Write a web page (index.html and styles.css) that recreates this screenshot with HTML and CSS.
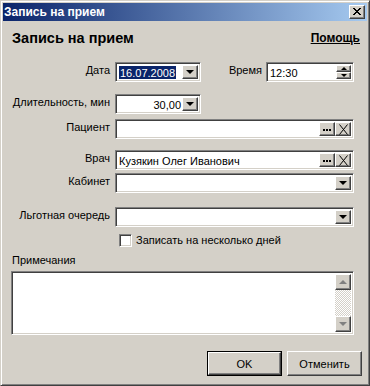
FILE: index.html
```html
<!DOCTYPE html>
<html lang="ru">
<head>
<meta charset="utf-8">
<title>Запись на прием</title>
<link rel="stylesheet" href="styles.css">
</head>
<body>
<div class="window">
  <div class="titlebar">
    <span class="title">Запись на прием</span>
    <span class="close raised">
      <svg width="8" height="7" viewBox="0 0 8 7"><path d="M0 0L7 7M1 0L8 7M7 0L0 7M8 0L1 7" stroke="#000" stroke-width="1" fill="none" shape-rendering="crispEdges"/></svg>
    </span>
  </div>
  <div class="content">
    <div class="head">
      <span class="heading">Запись на прием</span>
      <span class="help">Помощь</span>
    </div>

    <div class="row r-date">
      <span class="lbl">Дата</span>
      <div class="field sunken w-combo">
        <span class="val"><span class="sel">16.07.2008</span></span>
        <span class="btn raised drop"><i class="tri-down"></i></span>
      </div>
      <span class="lbl lbl-time">Время</span>
      <div class="field sunken w-time">
        <span class="val">12:30</span>
        <span class="spin">
          <span class="sbtn raised"><i class="tri-up-s"></i></span>
          <span class="sbtn raised"><i class="tri-down-s"></i></span>
        </span>
      </div>
    </div>

    <div class="row r-dur">
      <span class="lbl">Длительность, мин</span>
      <div class="field sunken w-combo">
        <span class="val right">30,00</span>
        <span class="btn raised drop"><i class="tri-down"></i></span>
      </div>
    </div>

    <div class="row r-pat">
      <span class="lbl">Пациент</span>
      <div class="field sunken grow">
        <span class="val"></span>
        <span class="btn raised dots"><svg width="8" height="2" viewBox="0 0 8 2"><rect x="0" y="0" width="2" height="2"/><rect x="3" y="0" width="2" height="2"/><rect x="6" y="0" width="2" height="2"/></svg></span>
        <span class="btn raised clr"><svg width="9" height="11" viewBox="0 0 9 11"><path d="M0.5 0.5L8.5 10.5M8.5 0.5L0.5 10.5" stroke="#000" stroke-width="1" fill="none"/></svg></span>
      </div>
    </div>

    <div class="row r-doc">
      <span class="lbl">Врач</span>
      <div class="field sunken grow">
        <span class="val">Кузякин Олег Иванович</span>
        <span class="btn raised dots"><svg width="8" height="2" viewBox="0 0 8 2"><rect x="0" y="0" width="2" height="2"/><rect x="3" y="0" width="2" height="2"/><rect x="6" y="0" width="2" height="2"/></svg></span>
        <span class="btn raised clr"><svg width="9" height="11" viewBox="0 0 9 11"><path d="M0.5 0.5L8.5 10.5M8.5 0.5L0.5 10.5" stroke="#000" stroke-width="1" fill="none"/></svg></span>
      </div>
    </div>

    <div class="row r-cab">
      <span class="lbl">Кабинет</span>
      <div class="field sunken grow">
        <span class="val"></span>
        <span class="btn raised drop"><i class="tri-down"></i></span>
      </div>
    </div>

    <div class="row r-queue">
      <span class="lbl">Льготная очередь</span>
      <div class="field sunken grow">
        <span class="val"></span>
        <span class="btn raised drop"><i class="tri-down"></i></span>
      </div>
    </div>

    <div class="check-row">
      <span class="checkbox sunken"></span>
      <span class="check-text">Записать на несколько дней</span>
    </div>

    <div class="notes-label">Примечания</div>
    <div class="notes sunken">
      <div class="notes-area"></div>
      <div class="vscroll">
        <span class="sbar raised"><i class="tri-up-g"></i></span>
        <span class="track"></span>
        <span class="sbar raised"><i class="tri-down-g"></i></span>
      </div>
    </div>

    <div class="buttons">
      <span class="pbtn default"><span class="pinner raised">OK</span></span>
      <span class="pbtn raised">Отменить</span>
    </div>
  </div>
</div>
</body>
</html>
```

FILE: styles.css
```css
* { box-sizing: border-box; }
html, body { margin: 0; padding: 0; background: #D4D0C8; }
body {
  font-family: "Liberation Sans", Arial, sans-serif;
  font-size: 11px;
  color: #000;
}
.window {
  width: 370px;
  height: 386px;
  background: #D4D0C8;
  border: 1px solid;
  border-color: #D4D0C8 #404040 #404040 #D4D0C8;
  box-shadow: inset 1px 1px #fff, inset -1px -1px #808080;
  padding: 2px;
  display: flex;
  flex-direction: column;
}
.raised {
  border: 1px solid;
  border-color: #fff #404040 #404040 #fff;
  box-shadow: inset -1px -1px #808080;
  background: #D4D0C8;
}
.sunken {
  border: 1px solid;
  border-color: #808080 #fff #fff #808080;
  box-shadow: inset 1px 1px #404040, inset -1px -1px #D4D0C8;
  background: #fff;
}
.titlebar {
  height: 18px;
  background: linear-gradient(to right, #0A246A, #A6CAF0);
  display: flex;
  align-items: center;
  justify-content: space-between;
  padding: 0 2px 0 1px;
}
.title {
  color: #fff;
  font-weight: bold;
  font-size: 12px;
  line-height: 14px;
}
.close {
  width: 16px;
  height: 14px;
  display: flex;
  align-items: center;
  justify-content: center;
  padding-bottom: 1px;
}
.close svg { display: block; }

.content {
  flex: 1;
  display: flex;
  flex-direction: column;
  padding: 0 5px 0 9px;
}
.head {
  margin-top: 9px;
  height: 16px;
  display: flex;
  justify-content: space-between;
  align-items: center;
  margin-right: 2px;
}
.heading {
  font-weight: bold;
  font-size: 14.5px;
}
.help {
  font-weight: bold;
  font-size: 12px;
  text-decoration: underline;
}

.row {
  display: flex;
  align-items: flex-start;
  margin-right: 8px;
  height: 20px;
}
.lbl {
  width: 98px;
  margin-right: 5px;
  text-align: right;
  line-height: 13px;
  padding-top: 2px;
  white-space: nowrap;
}
.r-date { margin-top: 16px; }
.r-dur { margin-top: 12px; }
.r-pat { margin-top: 5px; }
.r-doc { margin-top: 11px; }
.r-cab { margin-top: 3px; }
.r-queue { margin-top: 14px; }

.field {
  height: 20px;
  display: flex;
  align-items: stretch;
  padding: 2px;
}
.w-combo { width: 86px; }
.w-time { width: 88px; }
.grow { flex: 1; }
.lbl-time {
  flex: 1;
  width: auto;
  margin-right: 4px;
}
.val {
  flex: 1;
  padding-left: 1px;
  line-height: 16px;
  white-space: nowrap;
  overflow: hidden;
}
.val.right { text-align: right; padding-right: 1px; }
.sel {
  background: #0A246A;
  color: #fff;
  display: inline-block;
  line-height: 14px;
  padding: 0 1px;
  margin-top: 1px;
}
.btn {
  width: 16px;
  display: flex;
  align-items: center;
  justify-content: center;
}
.dots { align-items: flex-end; padding-bottom: 4px; }
.dots svg, .clr svg { display: block; }
.tri-down {
  width: 0; height: 0;
  border-left: 4px solid transparent;
  border-right: 4px solid transparent;
  border-top: 4px solid #000;
  margin-left: -1px;
}
.spin {
  display: flex;
  flex-direction: column;
  width: 15px;
}
.sbtn {
  flex: 1;
  display: flex;
  align-items: center;
  justify-content: center;
}
.tri-up-s {
  width: 0; height: 0;
  border-left: 3px solid transparent;
  border-right: 3px solid transparent;
  border-bottom: 3px solid #000;
}
.tri-down-s {
  width: 0; height: 0;
  border-left: 3px solid transparent;
  border-right: 3px solid transparent;
  border-top: 3px solid #000;
}

.check-row {
  display: flex;
  align-items: center;
  margin-top: 7px;
  margin-left: 107px;
  height: 13px;
}
.checkbox {
  width: 13px;
  height: 13px;
  margin-right: 4px;
}
.check-text { line-height: 13px; }

.notes-label {
  margin-top: 7px;
  line-height: 13px;
}
.notes {
  margin-top: 4px;
  margin-left: -1px;
  margin-right: 8px;
  height: 64px;
  display: flex;
  padding: 2px;
}
.notes-area { flex: 1; }
.vscroll {
  width: 16px;
  display: flex;
  flex-direction: column;
}
.sbar {
  height: 16px;
  display: flex;
  align-items: center;
  justify-content: center;
}
.track {
  flex: 1;
  background: repeating-conic-gradient(#fff 0 25%, #D4D0C8 0 50%) 0 0 / 2px 2px;
}
.tri-up-g, .tri-down-g {
  width: 0; height: 0;
  border-left: 4px solid transparent;
  border-right: 4px solid transparent;
}
.tri-up-g { border-bottom: 4px solid #808080; }
.tri-down-g { border-top: 4px solid #808080; }

.buttons {
  margin-top: 16px;
  display: flex;
  justify-content: flex-end;
  gap: 5px;
}
.pbtn {
  width: 75px;
  height: 25px;
  display: flex;
  align-items: center;
  justify-content: center;
  font-size: 11px;
}
.pbtn.default {
  border: 1px solid #000;
  padding: 0;
}
.pinner {
  width: 100%;
  height: 100%;
  display: flex;
  align-items: center;
  justify-content: center;
}
```
